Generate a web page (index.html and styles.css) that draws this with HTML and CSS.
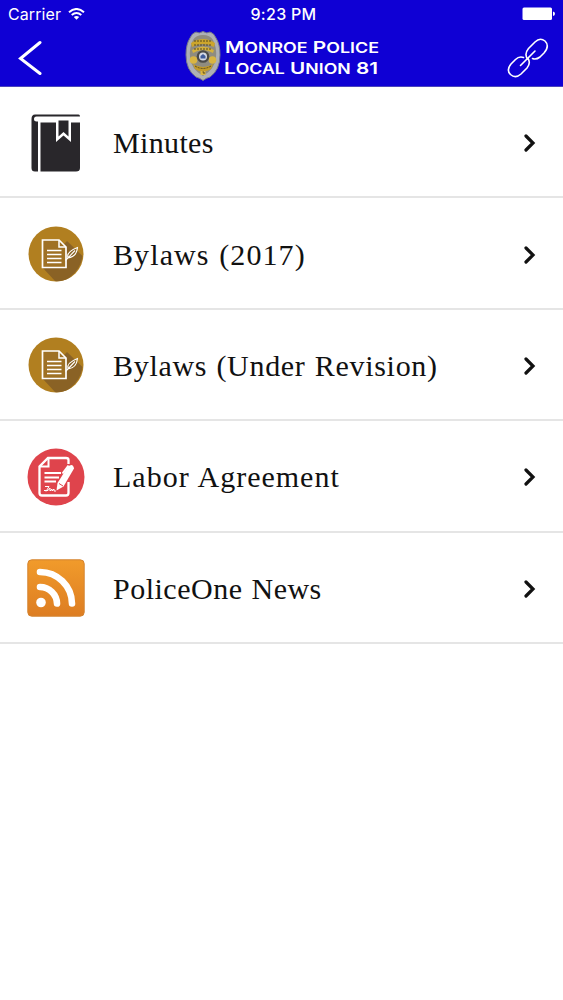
FILE: index.html
```html
<!DOCTYPE html>
<html lang="en">
<head>
    <meta charset="UTF-8">
    <meta name="viewport" content="width=device-width, initial-scale=1.0">
    <title>Monroe Police Local Union 81</title>
    <link rel="stylesheet" href="styles.css">
</head>
<body>
    <header class="header">
        <!-- Status Bar -->
        <div class="status-bar">
            <div class="carrier">
                <span>Carrier</span>
                <svg width="17" height="12" viewBox="0 0 17 12" fill="none" stroke="#fff" stroke-width="2">
                    <path d="M1 4.2Q8.500-2.200 16 4.200M3.700 7Q8.500 3 13.300 7"/>
                    <path d="M5.800 9Q8.500 6.800 11.200 9L8.500 11.800Z" fill="#fff" stroke="none"/>
                </svg>
            </div>
            <div class="time">9:23 PM</div>
            <div class="battery">
                <svg width="34" height="14" viewBox="0 0 34 14" fill="#fff">
                    <rect x="1.500" y="0.500" width="29.500" height="12.500" rx="1.500"/>
                    <path d="M32 4.500Q34 5 34 6.700T32 9Z"/>
                </svg>
            </div>
        </div>

        <!-- Nav Bar -->
        <nav class="nav-bar">
            <a class="back" href="#" aria-label="Back">
                <svg width="24" height="36" viewBox="0 0 24 36" fill="none" stroke="#fff" stroke-width="3" stroke-linecap="round">
                    <path d="M22 2.500L2.500 18.500L22 33.500"/>
                </svg>
            </a>
            <div class="brand">
                <svg width="36" height="50" viewBox="0 0 36 50">
                    <path d="M11 1Q14 3 18 .5Q22 3 25 1Q29 2 31 7Q35 13 35 24Q35 39 25 46Q21 47 18 49.500Q15 47 11 46Q1 39 1 24Q1 13 5 7Q7 2 11 1Z" fill="#aeb0b5" stroke="#77798b"/>
                    <path d="M18 4Q25 4 28 9Q32 17 31 26Q30 38 18 45Q6 38 5 26Q4 17 8 9Q11 4 18 4Z" fill="#8f8c80"/>
                    <path d="M6 12Q18 4 30 12L29 16Q18 10 7 16Z" fill="#cda62c"/>
                    <path d="M7 19Q18 12 29 19L28 22Q18 16 8 22Z" fill="#d6b23c"/>
                    <path d="M9 10L27 10M9 14L27 14M9 18L27 18" stroke="#574921" stroke-width="1" stroke-dasharray="2 1"/>
                    <circle cx="8.500" cy="29" r="3.800" fill="#d9b542"/>
                    <circle cx="27.500" cy="29" r="3.800" fill="#d9b542"/>
                    <path d="M8 33Q18 39 28 33L26 38Q18 43 10 38Z" fill="#c49c2a"/>
                    <path d="M10 35Q18 40 26 35" stroke="#574921" fill="none" stroke-dasharray="2 1"/>
                    <circle cx="18" cy="25.500" r="6.300" fill="#4b4a48"/>
                    <circle cx="18" cy="25.500" r="4" fill="#d5d9e6"/>
                    <path d="M15.500 25L18 23L20.500 25V27.500H15.500Z" fill="#405b9b"/>
                    <rect x="15.500" y="40" width="5" height="4" fill="#dab640"/>
                    <path d="M17.500 41H19V43" stroke="#574921" fill="none"/>
                </svg>
                <svg class="brand-name" width="158" height="42" viewBox="0 0 158 42">
                    <text x="3" y="18" textLength="154" lengthAdjust="spacingAndGlyphs"><tspan>M</tspan><tspan class="small">ONROE</tspan> <tspan>P</tspan><tspan class="small">OLICE</tspan></text>
                    <text x="2" y="39" textLength="154" lengthAdjust="spacingAndGlyphs"><tspan>L</tspan><tspan class="small">OCAL</tspan> <tspan>U</tspan><tspan class="small">NION</tspan> <tspan>81</tspan></text>
                </svg>
            </div>
            <a class="link" href="#" aria-label="Links">
                <svg width="42" height="42" viewBox="0 0 42 42" fill="none" stroke="#fff" stroke-width="1.600" stroke-linecap="round">
                    <path d="M20.500 22Q17 17 21.500 11.500L28 5Q33 0 38 4Q43 9 37 16L33 20Q29 23 25.500 21.500"/>
                    <path d="M16.500 20.500Q12 19 8.500 22.500L4 27Q-1 33 3.500 37.500Q8.500 42 14 37L20 31Q24 26 21 21.500"/>
                    <path d="M13.500 28.500L28 14"/>
                </svg>
            </a>
        </nav>
    </header>

    <!-- Menu -->
    <main class="menu">
        <a class="row" href="#">
            <svg class="icon" viewBox="0 0 58 58">
                <path d="M8 .5H51.500Q53 .5 53 2.500H9.500Q7 2.500 7 5T9.500 7.500H11V57.500H8Q4.500 57.500 4.500 54V5Q4.500 .5 8 .5Z" fill="#29272b"/>
                <path d="M13.500 8.500H29V28L36.500 21.500L44 28V8.500H53V54Q53 57.500 49 57.500H13.500Z" fill="#29272b"/>
                <path d="M31.500 6.500H41.500V22.500L36.500 18L31.500 22.500Z" fill="#29272b"/>
            </svg>
            <span class="label minutes">Minutes</span>
            <svg class="chevron" viewBox="0 0 12 20"><path d="M2 3L9 10L2 17"/></svg>
        </a>
        <a class="row" href="#">
            <svg class="icon" viewBox="0 0 58 58">
                <circle cx="29" cy="29" r="27.500" fill="#b17f20"/>
                <path d="M15 42L40 16L55.500 31Q54 44 42 53Q34 57 28 56Z" fill="#8a6225"/>
                <path d="M15.500 15H32L39 22V42.500H15.500Z" fill="#9f7125" stroke="#fff" stroke-width="1.700"/>
                <path d="M32 15V22H39" fill="none" stroke="#fff" stroke-width="1.500"/>
                <path d="M20 25.500H34.500M20 29.500H34.500M20 33.500H34.500M20 37.500H34.500" stroke="#fff" stroke-width="1.500"/>
                <path d="M38.500 35.500L48 25.500M41 33Q39 27 50.500 22.500Q49.500 32 41 33Z" fill="none" stroke="#fff" stroke-width="1.100"/>
            </svg>
            <span class="label bylaws">Bylaws (2017)</span>
            <svg class="chevron" viewBox="0 0 12 20"><path d="M2 3L9 10L2 17"/></svg>
        </a>
        <a class="row" href="#">
            <svg class="icon" viewBox="0 0 58 58">
                <circle cx="29" cy="29" r="27.500" fill="#b17f20"/>
                <path d="M15 42L40 16L55.500 31Q54 44 42 53Q34 57 28 56Z" fill="#8a6225"/>
                <path d="M15.500 15H32L39 22V42.500H15.500Z" fill="#9f7125" stroke="#fff" stroke-width="1.700"/>
                <path d="M32 15V22H39" fill="none" stroke="#fff" stroke-width="1.500"/>
                <path d="M20 25.500H34.500M20 29.500H34.500M20 33.500H34.500M20 37.500H34.500" stroke="#fff" stroke-width="1.500"/>
                <path d="M38.500 35.500L48 25.500M41 33Q39 27 50.500 22.500Q49.500 32 41 33Z" fill="none" stroke="#fff" stroke-width="1.100"/>
            </svg>
            <span class="label revision">Bylaws (Under Revision)</span>
            <svg class="chevron" viewBox="0 0 12 20"><path d="M2 3L9 10L2 17"/></svg>
        </a>
        <a class="row" href="#">
            <svg class="icon" viewBox="0 0 58 58">
                <circle cx="29" cy="29" r="28.500" fill="#df444c"/>
                <path d="M41.500 16V12Q41.500 10 39 10H21L12.500 18.500V45Q12.500 47.500 15 47.500H39Q41.500 47.500 41.500 45V34" fill="none" stroke="#fff" stroke-width="2.300"/>
                <path d="M21.500 10V18.500H12.500" fill="none" stroke="#fff" stroke-width="2"/>
                <path d="M17.500 25H34M17.500 29.500H32M17.500 33.500H29" stroke="#fff" stroke-width="1.800"/>
                <path d="M18 38.500H22L19 43.500M17 42.500H21L23 40V43L25 41V43L27 41V43H29" fill="none" stroke="#fff" stroke-width="1"/>
                <path d="M41 18.500Q46 14.500 47 20.500L36.500 38.500L29.500 42.500L30.500 35Z" fill="#fff"/>
                <path d="M41.500 17.500L35.500 25.500" stroke="#fff" stroke-width="2"/>
                <path d="M32 35.500L36 38" stroke="#df444c"/>
            </svg>
            <span class="label labor">Labor Agreement</span>
            <svg class="chevron" viewBox="0 0 12 20"><path d="M2 3L9 10L2 17"/></svg>
        </a>
        <a class="row" href="#">
            <svg class="icon" viewBox="0 0 58 58">
                <defs>
                    <linearGradient id="feed" x2="0" y2="1">
                        <stop offset="0" stop-color="#f19b2b"/>
                        <stop offset="1" stop-color="#dd7d22"/>
                    </linearGradient>
                </defs>
                <rect x="0.800" y="0.800" width="56.400" height="56.400" rx="4" fill="url(#feed)" stroke="#d48431"/>
                <circle cx="14" cy="43.500" r="4.800" fill="#fff"/>
                <path d="M13 28A17 17 0 0 1 30 44.500M13 13A32 32 0 0 1 45 44.500" fill="none" stroke="#fff" stroke-width="6.600" stroke-linecap="round"/>
            </svg>
            <span class="label news">PoliceOne News</span>
            <svg class="chevron" viewBox="0 0 12 20"><path d="M2 3L9 10L2 17"/></svg>
        </a>
    </main>
</body>
</html>
```
FILE: styles.css
```css
* {
    box-sizing: border-box;
}

body {
    margin: 0;
    background-color: #fff;
    color: #111;
}

svg {
    display: block;
}

.header {
    height: 87px;
    background-color: #0f00d4;
    border-bottom: 1px solid #4b43bd;
    color: #fff;
}

.status-bar {
    display: grid;
    grid-template-columns: 1fr auto 1fr;
    align-items: center;
    height: 28px;
    padding: 0 8px;
    font-family: Inter, sans-serif;
    font-size: 16px;
}

.carrier {
    display: flex;
    align-items: center;
    gap: 7px;
    letter-spacing: 0.1px;
}

.time {
    padding-left: 4px;
    font-weight: 500;
    letter-spacing: 0.3px;
}

.battery {
    justify-self: end;
}

.nav-bar {
    display: grid;
    grid-template-columns: 1fr auto 1fr;
    height: 58px;
    padding: 3px 14px 0 18px;
}

.back {
    padding-top: 9px;
}

.brand {
    display: flex;
    gap: 1px;
    margin-right: 2px;
}

.brand-name {
    margin-top: 4px;
    font-family: Inter, sans-serif;
    font-size: 16.6px;
    font-weight: 600;
    fill: #fff;
}

.brand-name .small {
    font-size: 14.2px;
}

.link {
    justify-self: end;
    padding-top: 6px;
}

.menu {
    display: flex;
    flex-direction: column;
}

.row {
    display: flex;
    align-items: center;
    height: 111.4px;
    padding: 2px 27px 0 27px;
    border-bottom: 2px solid #e5e5e5;
    color: #111;
    text-decoration: none;
}

.icon {
    width: 58px;
    height: 58px;
    margin-right: 28px;
}

.label {
    flex: 1;
    padding-top: 1px;
    font-family: "Liberation Serif", serif;
    font-size: 30px;
    white-space: nowrap;
}

.minutes {
    letter-spacing: 0.35px;
}

.bylaws {
    letter-spacing: 1.1px;
    word-spacing: 1px;
}

.revision {
    letter-spacing: 0.7px;
    word-spacing: 1px;
}

.labor {
    letter-spacing: 1px;
    word-spacing: 1px;
}

.news {
    letter-spacing: 0.5px;
    word-spacing: 1px;
}

.chevron {
    width: 12px;
    height: 20px;
    margin-top: 1px;
    fill: none;
    stroke: #111;
    stroke-width: 3.2;
    stroke-linecap: round;
}
```
